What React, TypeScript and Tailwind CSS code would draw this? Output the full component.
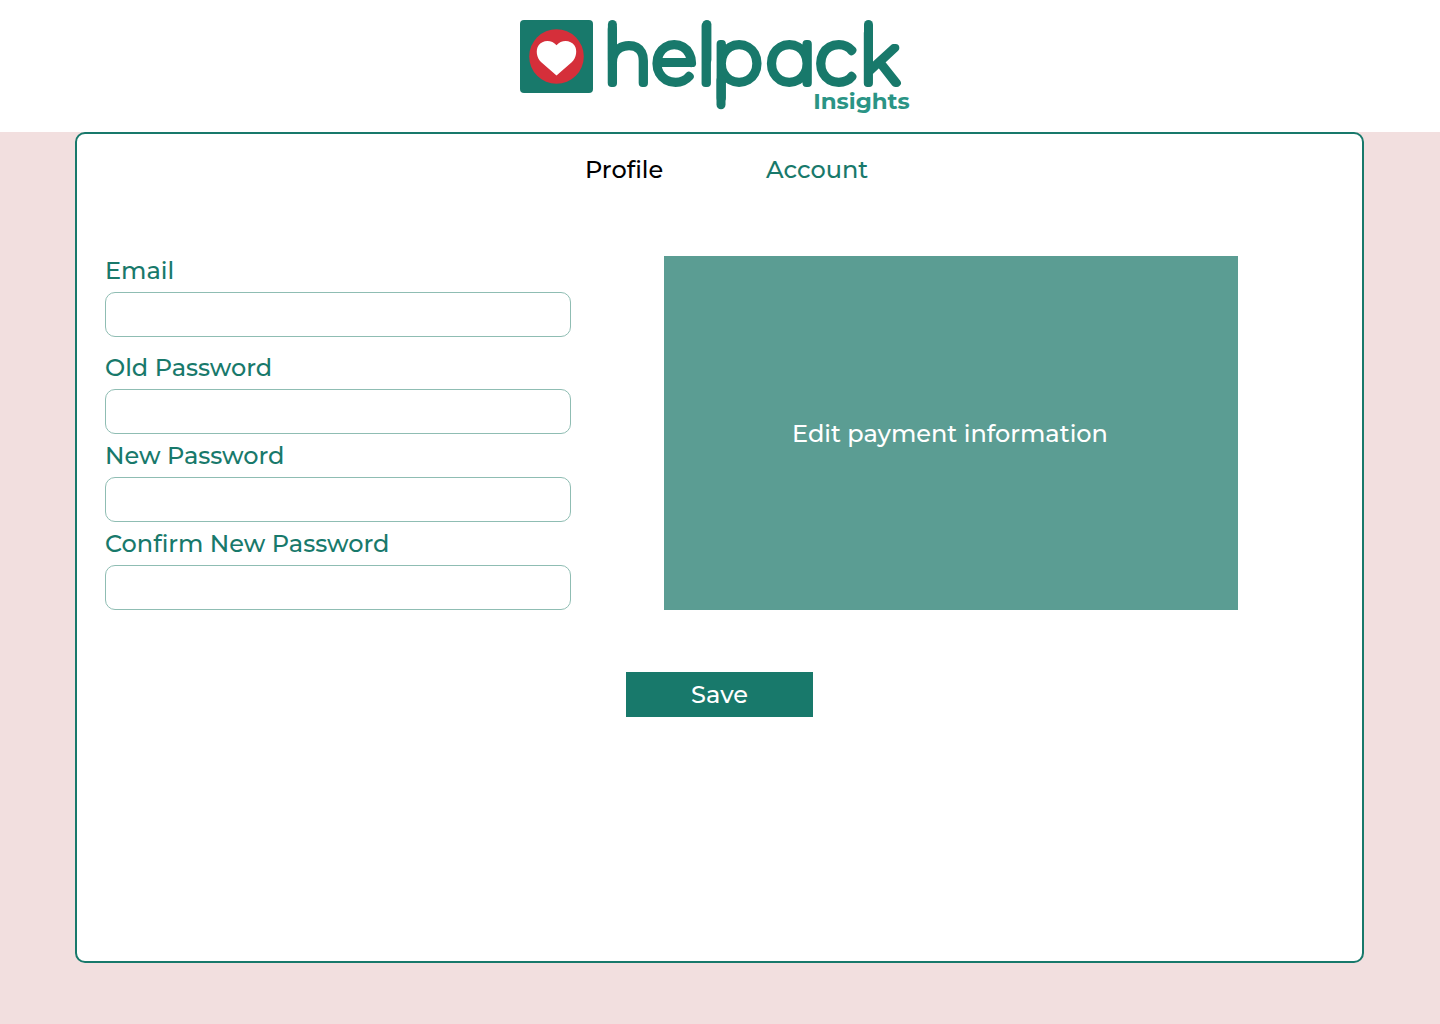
const labelFont = 'font-[Montserrat,Inter,sans-serif] font-medium text-2xl leading-[29px] whitespace-nowrap';

const thin = "font-[Montserrat,sans-serif] font-thin";
const thinSingleStorey = "font-[Montserrat,sans-serif] font-thin [font-feature-settings:'ss01']";

const wordmark = [
  { ch: "h", x: 603.3, size: 73, font: thin },
  { ch: "e", x: 652.2, size: 75, font: thin },
  { ch: "l", x: 696.8, size: 76, font: thin },
  { ch: "p", x: 711.9, size: 74, font: thin },
  { ch: "a", x: 766.8, size: 74, font: thinSingleStorey },
  { ch: "c", x: 816, size: 74, font: thin },
  { ch: "k", x: 860, size: 67, font: thin },
];

function Logo() {
  return (
    <svg width="400" height="108" viewBox="515 14 400 108" className="mt-[14px] ml-[-10px] overflow-visible" role="img" aria-label="helpack Insights">
      <rect x="520" y="20" width="73" height="73" rx="4" fill="#18796b" />
      <circle cx="556.5" cy="56.5" r="27.3" fill="#d52f3a" />
      <path d="M556.5 75.5 L541 62 C536.5 57.5 535.5 50 538.5 45.5 C542.5 39.5 552 39.5 556.5 45.3 C561 39.5 570.5 39.5 574.5 45.5 C577.5 50 576.5 57.5 572 62 Z" fill="#fff" />
      <text y="82.8" fill="#18796b" stroke="#18796b" strokeWidth="7.8" strokeLinejoin="round">
        {wordmark.map((l) => (
          <tspan key={l.ch} x={l.x} fontSize={l.size} className={l.font}>{l.ch}</tspan>
        ))}
      </text>
      <g stroke="#18796b" strokeWidth="9" strokeLinecap="round">
        <line x1="612.4" y1="24.5" x2="612.4" y2="60" />
        <line x1="706.9" y1="24.5" x2="706.9" y2="60" />
        <line x1="868.5" y1="24.5" x2="868.5" y2="60" />
        <line x1="721" y1="80" x2="721" y2="104.7" />
      </g>
      <text x="813.2" y="109" textLength="96.6" fontSize="22.5" lengthAdjust="spacingAndGlyphs" fill="#2a9485" className="font-[Montserrat,sans-serif] font-bold">Insights</text>
    </svg>
  );
}

function Field({ label, className }: { label: string; className?: string }) {
  return (
    <label className={`flex flex-col ${className ?? ""}`}>
      <span className={`${labelFont} text-[#18796b]`}>{label}</span>
      <input className="mt-[7px] h-[45px] w-[466px] rounded-[10px] border border-[#8fbdb3] bg-white px-3 outline-none" />
    </label>
  );
}

export default function App() {
  return (
    <div className="h-[1024px] w-[1440px] overflow-hidden bg-[#f2dfdf]">
      <header className="flex h-[132px] justify-center bg-white">
        <Logo />
      </header>
      <main className="ml-[75px] flex h-[831px] w-[1289px] flex-col rounded-[10px] border-2 border-[#18796b] bg-white">
        <nav className="flex pt-[21px] pl-[508px]">
          <a className={`${labelFont} w-[181px] text-black`}>Profile</a>
          <a className={`${labelFont} text-[#18796b]`}>Account</a>
        </nav>
        <div className="mt-[72px] flex pl-[28px]">
          <form className="flex flex-col">
            <Field label="Email" />
            <Field label="Old Password" className="mt-[16px]" />
            <Field label="New Password" className="mt-[7px]" />
            <Field label="Confirm New Password" className="mt-[7px]" />
          </form>
          <section className="ml-[93px] flex h-[354px] w-[574px] items-center justify-center bg-[#5b9d93]">
            <span className={`${labelFont} pr-[2px] text-white`}>Edit payment information</span>
          </section>
        </div>
        <button className={`${labelFont} mt-[62px] ml-[549px] h-[45px] w-[187px] bg-[#18796b] text-white`}>Save</button>
      </main>
    </div>
  );
}
